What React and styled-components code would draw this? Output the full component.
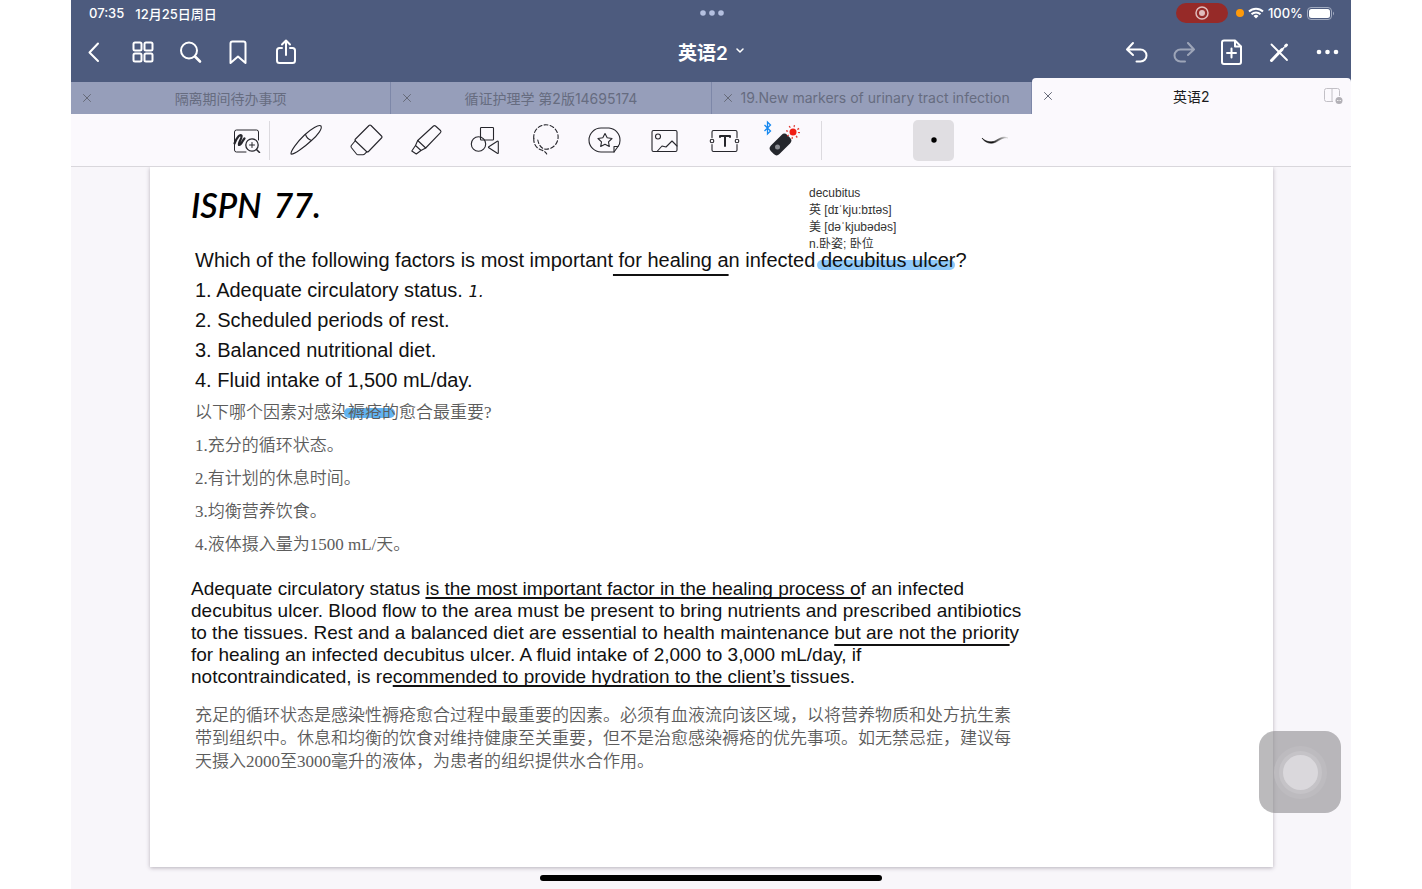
import React from "react";
import styled, { createGlobalStyle, css } from "styled-components";

const UI = `Inter, "Noto Sans CJK SC", sans-serif`;
const ARIAL = `"Liberation Sans", "Noto Sans CJK SC", sans-serif`;
const TIMES = `"Liberation Serif", "Noto Sans CJK SC", serif`;

const Global = createGlobalStyle`
  *, *::before, *::after { box-sizing: border-box; }
  body { margin: 0; background: #fff; }
  button { border: 0; padding: 0; background: none; color: inherit; font: inherit; }
  p, h1, h2 { margin: 0; font-weight: inherit; }
`;

const Screen = styled.div`
  position: relative;
  display: flex;
  flex-direction: column;
  min-height: 100vh;
  margin: 0 71px;
  background: #f8f6fa;
  font-family: ${UI};
`;

const Header = styled.header`
  background: #4d5b7e;
  color: #fff;
`;

const StatusBar = styled.div`
  display: grid;
  grid-template-columns: 1fr auto 1fr;
  align-items: center;
  height: 26px;
  padding: 0 16px 0 18px;
  font-size: 13px;
  font-weight: 500;
`;

const StatusGroup = styled.div`
  display: flex;
  align-items: center;
  gap: ${(p) => p.$gap}px;
  justify-content: ${(p) => (p.$end ? "flex-end" : "flex-start")};
`;

const RecordPill = styled.span`
  display: flex;
  align-items: center;
  justify-content: center;
  width: 52px;
  height: 20px;
  margin-right: 4px;
  border-radius: 10px;
  background: #962a28;
`;

const OrangeDot = styled.span`
  width: 8px;
  height: 8px;
  border-radius: 50%;
  background: #ff9a0a;
`;

const NavBar = styled.nav`
  display: grid;
  grid-template-columns: 1fr auto 1fr;
  align-items: center;
  height: 52px;
`;

const NavGroup = styled.div`
  display: flex;
  justify-content: ${(p) => (p.$end ? "flex-end" : "flex-start")};
`;

const NavButton = styled.button`
  display: flex;
  align-items: center;
  justify-content: center;
  width: 48px;
  height: 48px;
  opacity: ${(p) => (p.disabled ? 0.45 : 1)};
  color: #fff;
`;

const DocTitle = styled.button`
  display: flex;
  align-items: center;
  gap: 8px;
  padding-bottom: 2px;
  font-size: 19px;
  font-weight: 600;
`;

const Tabs = styled.div`
  display: flex;
  align-items: flex-end;
  height: 36px;
`;

const Tab = styled.div`
  flex: 1 1 0;
  min-width: 0;
  display: grid;
  grid-template-columns: 29px minmax(0, 1fr) 29px;
  align-items: center;
  height: 32px;
  border-right: 1px solid #7d87a8;
  background: #969eba;
  color: #666c80;
  font-size: 14px;
  ${(p) =>
    p.$active &&
    css`
      height: 36px;
      border-right: 0;
      border-radius: 4px 4px 0 0;
      background: #fbf9fd;
      color: #1c1c20;
    `}
`;

const TabIconButton = styled.button`
  display: flex;
  align-items: center;
  justify-content: center;
  width: 32px;
  height: 24px;
  color: #666a78;
`;

const TabTitle = styled.span`
  padding-bottom: 1px;
  text-align: center;
  white-space: nowrap;
`;

const Toolbar = styled.div`
  display: flex;
  align-items: center;
  height: 53px;
  padding: 0 0 0 154px;
  border-bottom: 1px solid #d9d7dc;
  background: #fbf9fd;
`;

const ToolButton = styled.button`
  display: flex;
  align-items: center;
  justify-content: center;
  width: ${(p) => p.$width || 60}px;
  height: 41px;
  border-radius: 5px;
  background: ${(p) => (p.$selected ? "#e0dee2" : "transparent")};
  color: #26262c;
`;

const Divider = styled.span`
  width: 1px;
  height: 39px;
  margin: 0 5px 0 ${(p) => p.$before || 0}px;
  background: #dcdadf;
`;

const StrokeTools = styled.div`
  display: flex;
  gap: 20px;
  margin-left: 86px;
`;

const Canvas = styled.main`
  flex: 1;
  display: flex;
  padding: 0 78px 22px 79px;
`;

const Paper = styled.article`
  flex: 1;
  min-width: 0;
  padding: 0 40px 0 45px;
  background: #fff;
  box-shadow: 0 1px 4px rgba(60, 50, 70, 0.35);
  white-space: nowrap;
  color: #111;
  clip-path: inset(0 -8px -8px -8px);
`;

const PaperTop = styled.div`
  display: flex;
  height: 78px;
`;

const Handwriting = styled.h1`
  display: flex;
  width: 618px;
  gap: 12px;
  padding-top: 16px;
  margin-left: -4px;
  font-family: Lato, sans-serif;
  font-size: 34px;
  font-style: italic;
  font-weight: 600;
  line-height: 44px;
  color: #000;
`;

const InkNumber = styled.span`
  font-family: "DejaVu Sans", sans-serif;
  font-size: 16px;
  font-style: italic;
  line-height: 1;
`;

const Note = styled.aside`
  padding-top: 18px;
  font-family: ${ARIAL};
  font-size: 12px;
  line-height: 17px;
  color: #333;
`;

const Question = styled.section`
  margin-bottom: 1px;
  font-family: ${ARIAL};
  font-size: 20px;
  line-height: 30px;
`;

const Translation = styled.section`
  font-family: ${TIMES};
  font-size: 17px;
  font-weight: 350;
  line-height: ${(p) => p.$leading}px;
  color: #5c5c5c;
`;

const Rationale = styled.section`
  margin: 17px 0 16px -4px;
  font-family: ${ARIAL};
  font-size: 19px;
  line-height: 22px;
`;

const Underlined = styled.span`
  text-decoration: underline 2px;
  text-decoration-skip-ink: none;
  text-underline-offset: ${(p) => p.$drop}px;
`;

const Highlight = styled.mark`
  position: relative;
  z-index: 0;
  background: none;
  color: inherit;
  &::after {
    content: "";
    position: absolute;
    z-index: -1;
    left: -4px;
    right: ${(p) => p.$right || 0}px;
    bottom: ${(p) => p.$bottom}px;
    height: 10px;
    border-radius: 5px;
    background: ${(p) => p.$color};
  }
`;

const HomeIndicator = styled.div`
  position: absolute;
  left: 50%;
  bottom: 8px;
  width: 342px;
  height: 6px;
  margin-left: -171px;
  border-radius: 3px;
  background: #000;
`;

const AssistiveTouch = styled.button`
  position: absolute;
  right: 10px;
  bottom: 76px;
  display: flex;
  align-items: center;
  justify-content: center;
  width: 82px;
  height: 82px;
  border-radius: 16px;
  background: rgba(130, 128, 132, 0.54);
`;

const TouchKnob = styled.span`
  width: 35px;
  height: 35px;
  border-radius: 50%;
  background: #dad8dc;
  box-shadow: 0 0 0 4px #c5c3c7, 0 0 0 9px #bdbbbf;
`;

const Icon = ({ w = 28, h = 28, sw = 2, children }) => (
  <svg
    width={w}
    height={h}
    viewBox={`0 0 ${w} ${h}`}
    fill="none"
    stroke="currentColor"
    strokeWidth={sw}
    strokeLinecap="round"
    strokeLinejoin="round"
    aria-hidden="true"
  >
    {children}
  </svg>
);

const Close = () => (
  <Icon w={8} h={8} sw={1}>
    <path d="M0.5 0.5l7 7M7.5 0.5l-7 7" />
  </Icon>
);

const leftNav = [
  ["返回", <path d="M17 5.500L8.500 14.500L17 23" />],
  [
    "缩略图",
    <>
      <rect x="4.500" y="4.500" width="8" height="8" rx="1.500" />
      <rect x="15.500" y="4.500" width="8" height="8" rx="1.500" />
      <rect x="4.500" y="15.500" width="8" height="8" rx="1.500" />
      <rect x="15.500" y="15.500" width="8" height="8" rx="1.500" />
    </>,
  ],
  [
    "搜索",
    <>
      <circle cx="12" cy="12.500" r="8" />
      <path d="M18 18.500l5 5" strokeWidth="2.600" />
    </>,
  ],
  ["书签", <path d="M7.500 3.500h11a2 2 0 0 1 2 2V25l-7.500-6.500L5.500 25V5.500a2 2 0 0 1 2-2z" />],
  [
    "分享",
    <>
      <path d="M9 10H6.500a2.500 2.500 0 0 0-2.500 2.500v10A2.500 2.500 0 0 0 6.500 25h13a2.500 2.500 0 0 0 2.500-2.500v-10A2.500 2.500 0 0 0 19.500 10H17" />
      <path d="M13 17V3M9 6.500L13 2.500l4 4" />
    </>,
  ],
];

const rightNav = [
  ["撤销", <path d="M13 5L7 11.500l6 5.500M7 11.500h13.500a5.500 5.500 0 0 1 0 12H16.500" />],
  ["重做", <path d="M20 5l6 6.500l-6 5.500M26 11.500H12.500a5.500 5.500 0 0 0 0 12H17" />, true],
  [
    "添加页面",
    <>
      <path d="M8 2.500h11l6 6V24a2 2 0 0 1-2 2H8a2 2 0 0 1-2-2V4.500a2 2 0 0 1 2-2z" />
      <path d="M19 3v5.500h5.500M15.500 10.500v9M11 15h9" />
    </>,
  ],
  [
    "只读模式",
    <>
      <path d="M7.500 6.500l15.500 15.500" strokeWidth="1.800" />
      <path d="M7.500 22.500l10.500-11" strokeWidth="3" />
      <path d="M18 11.500l2-2" strokeWidth="1.600" />
      <path d="M21.500 8l1-1" strokeWidth="3" />
    </>,
  ],
  [
    "更多",
    <g fill="currentColor" stroke="none">
      <circle cx="7" cy="14" r="2.300" />
      <circle cx="15.500" cy="14" r="2.300" />
      <circle cx="24" cy="14" r="2.300" />
    </g>,
  ],
];

const tools = [
  [
    "钢笔",
    <>
      <path d="M4 32C3.500 29.500 10 20 17.500 13C24 7 32 2 34 4C35.500 6.500 31 13 24.500 18.500C17 25.500 6.500 33 4 32z" />
      <path d="M18.500 12.500Q20 17 24.500 18.500" />
    </>,
  ],
  [
    "橡皮擦",
    <>
      <path d="M24 3.500L34.500 14q1 1 0 2L21.500 29.500q-1 1-2 0L8.500 19q-1-1 0-2L22 3.500q1-1 2 0z" />
      <path d="M8.500 18.500L4.300 23.500q-.6 1 0 2L9.500 32q.6.800 1.500.8h5q1 0 1.500-.6l2.500-2.500" />
    </>,
  ],
  [
    "荧光笔",
    <>
      <path d="M28.500 4L33.500 8.500q1 1 0 2.200L18.700 26L10.700 18.500L26.500 4q1-.8 2 0z" />
      <path d="M10.700 18.500l-2.200 5l5.500 5l4.700-2.500M8.500 23.500L4.800 29l4.500 3l4.700-3.500" />
    </>,
  ],
  [
    "形状",
    <>
      <rect x="13.500" y="5.500" width="13" height="12.500" rx="0.800" />
      <circle cx="11.500" cy="22" r="7.200" />
      <path d="M21.800 24.800l8.500-5.500q1-.5 1 .5v11q0 1-1 .5l-8.500-5.500q-.8-.5 0-1z" />
    </>,
  ],
  [
    "套索",
    <>
      <path
        d="M6.800 16.500A12.200 12.200 0 1 1 19 27.200C14 27 11.500 22 10.800 18"
        strokeDasharray="4 2.200"
      />
      <path d="M6.800 16.500C6.500 21 8.500 25 12 27C15 28.500 18.500 29 19.700 32" strokeDasharray="4 2.200" />
    </>,
  ],
  [
    "贴纸",
    <>
      <path d="M27 30H14A12 12 0 0 1 14 6h8A12 12 0 0 1 33 18.500q0 4-2 6z" />
      <path d="M27 30v-5.500h4" />
      <path d="M18 11.500l2.200 4.300l4.800.7l-3.500 3.300l.8 4.700l-4.300-2.200l-4.300 2.200l.8-4.700L11 16.500l4.800-.7z" />
    </>,
  ],
  [
    "图片",
    <>
      <rect x="5" y="8.500" width="25" height="21" rx="1.500" />
      <circle cx="11" cy="14.500" r="2.500" />
      <path d="M10 29.500l5-5.500l4 1l6-6l5 5" />
    </>,
  ],
  [
    "文本框",
    <>
      <path d="M5 15.500V10Q5 8.500 6.500 8.500h22Q30 8.500 30 10V15.500M5 22.500v5.500q0 1.500 1.500 1.500h22q1.500 0 1.500-1.500v-5.500" />
      <circle cx="5" cy="19" r="1.800" />
      <circle cx="30" cy="19" r="1.800" />
      <path d="M13 15v-1h10v1M18 14v10" strokeWidth="2" />
    </>,
  ],
];

const tabs = ["隔离期间待办事项", "循证护理学 第2版14695174", "19.New markers of urinary tract infection"];

export default function App() {
  return (
    <Screen>
      <Global />
      <Header>
        <StatusBar>
          <StatusGroup $gap={11}>
            <span>07:35</span>
            <span>12月25日周日</span>
          </StatusGroup>
          <svg width="24" height="6" fill="#b4c0e0" aria-hidden="true">
            <circle cx="3" cy="3" r="2.800" />
            <circle cx="12" cy="3" r="2.800" />
            <circle cx="21" cy="3" r="2.800" />
          </svg>
          <StatusGroup $gap={4} $end>
            <RecordPill>
              <svg width="14" height="14" aria-hidden="true">
                <circle cx="7" cy="7" r="6" fill="none" stroke="#e0bcbc" strokeWidth="1.500" />
                <circle cx="7" cy="7" r="3" fill="#e0bcbc" />
              </svg>
            </RecordPill>
            <OrangeDot />
            <svg width="16" height="12" fill="none" stroke="#fff" strokeWidth="2" aria-hidden="true">
              <path d="M1 4.500a10 10 0 0 1 14 0M3.500 7.200a6.500 6.500 0 0 1 9 0" />
              <path d="M8 11.500L5.500 9a3.500 3.500 0 0 1 5 0z" fill="#fff" stroke="none" />
            </svg>
            <span>100%</span>
            <svg width="28" height="13" aria-hidden="true">
              <rect x="0.500" y="0.500" width="24" height="12" rx="3.500" fill="none" stroke="#a2abc0" />
              <rect x="2" y="2" width="21" height="9" rx="2.500" fill="#fff" />
              <path d="M26 4.500q2 2 0 4z" fill="#a2abc0" />
            </svg>
          </StatusGroup>
        </StatusBar>
        <NavBar>
          <NavGroup>
            {leftNav.map(([label, art]) => (
              <NavButton key={label} aria-label={label}>
                <Icon>{art}</Icon>
              </NavButton>
            ))}
          </NavGroup>
          <DocTitle>
            英语2
            <Icon w={8} h={6} sw={2}>
              <path d="M1 1l3 3l3-3" strokeWidth="1.500" />
            </Icon>
          </DocTitle>
          <NavGroup $end>
            {rightNav.map(([label, art, disabled]) => (
              <NavButton key={label} aria-label={label} disabled={disabled}>
                <Icon w={30}>{art}</Icon>
              </NavButton>
            ))}
          </NavGroup>
        </NavBar>
        <Tabs>
          {tabs.map((title) => (
            <Tab key={title}>
              <TabIconButton aria-label={`关闭 ${title}`}>
                <Close />
              </TabIconButton>
              <TabTitle>{title}</TabTitle>
            </Tab>
          ))}
          <Tab $active>
            <TabIconButton aria-label="关闭 英语2">
              <Close />
            </TabIconButton>
            <TabTitle>英语2</TabTitle>
            <TabIconButton aria-label="分屏">
              <svg width="30" height="18" fill="none" stroke="#c2c0c6" aria-hidden="true">
                <path d="M10 14.500H3.500a2 2 0 0 1-2-2v-9a2 2 0 0 1 2-2h11a2 2 0 0 1 2 2V9M9 1.500v13" />
                <circle cx="16" cy="13.500" r="3.500" fill="#b2b0b6" stroke="none" />
                <path d="M14 13.500h4" stroke="#eee" strokeDasharray="1 0.500" />
              </svg>
            </TabIconButton>
          </Tab>
        </Tabs>
      </Header>

      <Toolbar>
        <ToolButton $width={44} aria-label="放大书写">
          <Icon w={28} h={26} sw={1}>
            <path d="M13 25H3.500a2 2 0 0 1-2-2v-18a2 2 0 0 1 2-2h20a2 2 0 0 1 2 2V13" />
            <path d="M1.500 16.500C4 10 7 7 8.500 8.500C9.500 11 5 16 6 18C8.500 18.500 9.500 13 11.500 11.500" strokeWidth="2.200" />
            <circle cx="19" cy="18" r="6.200" fill="#fbf9fd" strokeWidth="1.300" />
            <path d="M23.500 22.500l3 3" strokeWidth="1.500" />
            <path d="M16.500 18h5M19 15.500v5" />
          </Icon>
        </ToolButton>
        <Divider />
        {tools.map(([label, art]) => (
          <ToolButton key={label} aria-label={label}>
            <Icon w={36} h={36} sw={1.1}>{art}</Icon>
          </ToolButton>
        ))}
        <ToolButton aria-label="激光笔">
          <svg width="44" height="40" fill="none" aria-hidden="true">
            <path d="M1.500 5l6 6l-3 3V2l3 3l-6 6" stroke="#1488f0" strokeWidth="1.300" />
            <rect x="-11.500" y="-6" width="23" height="12" rx="4" fill="#25272d" transform="translate(17.500 24.500) rotate(-45)" />
            <circle cx="14.500" cy="27" r="2.500" fill="#8b8d93" />
            <circle cx="30" cy="12" r="3.500" fill="#f01c14" />
            <circle cx="30" cy="12" r="6" stroke="#e03a32" strokeWidth="2" strokeDasharray="1.200 3.512" />
          </svg>
        </ToolButton>
        <Divider $before={6} />
        <StrokeTools>
          <ToolButton $width={41} $selected aria-label="圆点笔触">
            <svg width="8" height="8" aria-hidden="true">
              <circle cx="4" cy="4" r="2.700" fill="#000" />
            </svg>
          </ToolButton>
          <ToolButton $width={41} aria-label="曲线笔触">
            <svg width="28" height="10" aria-hidden="true">
              <defs>
                <linearGradient id="fade">
                  <stop offset="0.400" stopColor="#111" />
                  <stop offset="1" stopColor="#ddd" />
                </linearGradient>
              </defs>
              <path d="M1 3C4 6 9 8 14 6C19 3 22 1 27 3C22 2 19 5 15 7C10 9.500 4 8 1 3z" fill="url(#fade)" stroke="url(#fade)" strokeWidth="0.600" />
            </svg>
          </ToolButton>
        </StrokeTools>
      </Toolbar>

      <Canvas>
        <Paper>
          <PaperTop>
            <Handwriting>
              <span>ISPN</span>
              <span>77.</span>
            </Handwriting>
            <Note>
              <p>decubitus</p>
              <p>英 [dɪˈkju:bɪtəs]</p>
              <p>美 [dəˈkjubədəs]</p>
              <p>n.卧姿; 卧位</p>
            </Note>
          </PaperTop>
          <Question>
            <p>
              Which of the following factors is most important
              <Underlined $drop={7}> for healing a</Underlined>n infected{" "}
              <Highlight $bottom={1} $color="#8fc9fa">decubitus ulcer</Highlight>?
            </p>
            <p>
              1. Adequate circulatory status. <InkNumber>1.</InkNumber>
            </p>
            <p>2. Scheduled periods of rest.</p>
            <p>3. Balanced nutritional diet.</p>
            <p>4. Fluid intake of 1,500 mL/day.</p>
          </Question>
          <Translation $leading={33}>
            <p>
              以下哪个因素对感染<Highlight $bottom={4} $right={4} $color="#62b4f2">褥疮的</Highlight>愈合最重要?
            </p>
            <p>1.充分的循环状态。</p>
            <p>2.有计划的休息时间。</p>
            <p>3.均衡营养饮食。</p>
            <p>4.液体摄入量为1500 mL/天。</p>
          </Translation>
          <Rationale>
            <p>
              Adequate circulatory status <Underlined $drop={2}>is the most important factor in the healing process o</Underlined>f an infected
            </p>
            <p>decubitus ulcer. Blood flow to the area must be present to bring nutrients and prescribed antibiotics</p>
            <p>
              to the tissues. Rest and a balanced diet are essential to health maintenance <Underlined $drop={5}>but are not the priorit</Underlined>y
            </p>
            <p>for healing an infected decubitus ulcer. A fluid intake of 2,000 to 3,000 mL/day, if</p>
            <p>
              notcontraindicated, is re<Underlined $drop={2}>commended to provide hydration to the client’s </Underlined>tissues.
            </p>
          </Rationale>
          <Translation $leading={23}>
            <p>充足的循环状态是感染性褥疮愈合过程中最重要的因素。必须有血液流向该区域，以将营养物质和处方抗生素</p>
            <p>带到组织中。休息和均衡的饮食对维持健康至关重要，但不是治愈感染褥疮的优先事项。如无禁忌症，建议每</p>
            <p>天摄入2000至3000毫升的液体，为患者的组织提供水合作用。</p>
          </Translation>
        </Paper>
      </Canvas>
      <AssistiveTouch aria-label="辅助触控">
        <TouchKnob />
      </AssistiveTouch>
      <HomeIndicator />
    </Screen>
  );
}
